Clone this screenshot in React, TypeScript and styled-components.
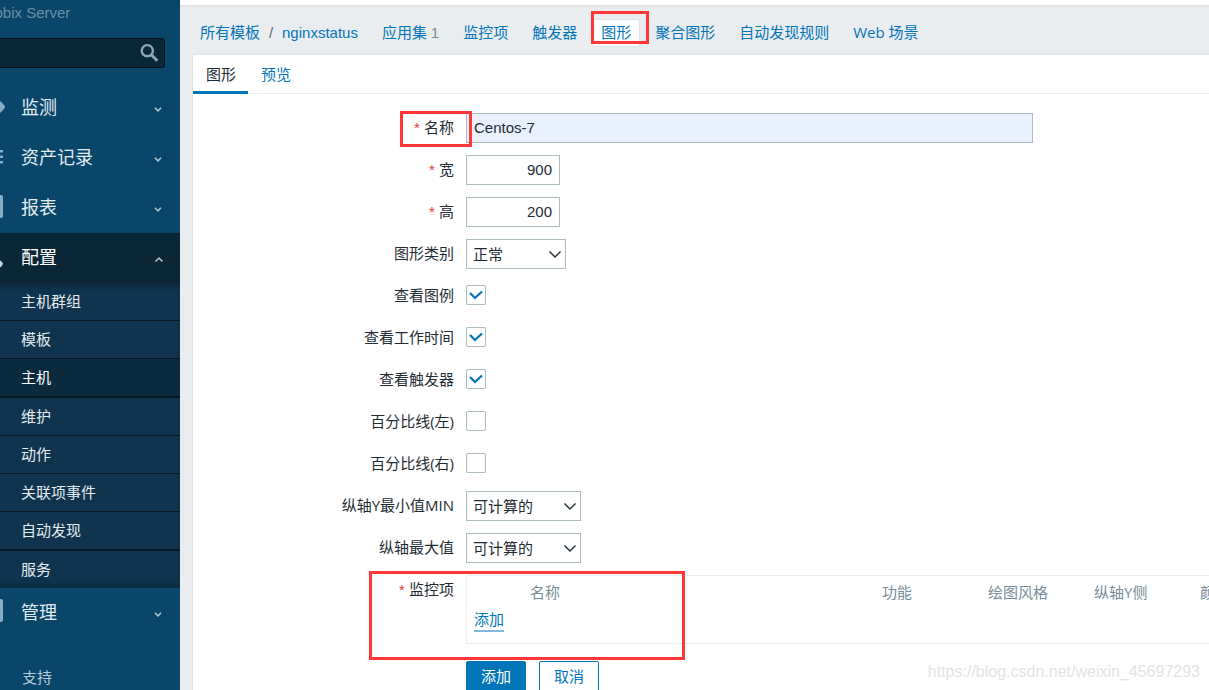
import React from 'react';
import styled, { createGlobalStyle, css } from 'styled-components';

const latin = '"Liberation Sans", Arial, "Noto Sans CJK SC", sans-serif';
const humanist = '"Open Sans", "Noto Sans CJK SC", sans-serif';
const blue = '#0275b8';
const marker = '#ff3737';

const GlobalStyle = createGlobalStyle`
  *, *::before, *::after { box-sizing: border-box; }
  body {
    margin: 0;
    background: #e9edf0;
    color: #1f2c33;
    font: 15px/20px ${latin};
  }
  a { color: ${blue}; text-decoration: none; }
  button, input, select { font: inherit; color: inherit; }
`;

const Shell = styled.div`
  position: relative;
  display: flex;
  height: 100vh;
  overflow: hidden;
`;

/* Sidebar */

const Sidebar = styled.aside`
  flex: 0 0 180px;
  overflow: hidden;
  background: #0a466a;
  color: #dfe9ef;
`;

const SidebarInner = styled.div`
  margin-left: -23px;
`;

const ServerName = styled.div`
  height: 38px;
  padding-top: 3px;
  color: #6b90a6;
`;

const SearchForm = styled.form`
  display: flex;
  align-items: center;
  height: 30px;
  margin: 0 15px 15px 0;
  border: 1px solid #04131c;
  border-radius: 3px;
  background: #0a2637;
`;

const SearchInput = styled.input`
  flex: 1;
  min-width: 0;
  height: 28px;
  border: 0;
  background: transparent;
  outline: 0;
`;

const SearchButton = styled.button`
  display: flex;
  padding: 0;
  margin-right: 5px;
  border: 0;
  background: transparent;
  color: #86a9bd;
`;

const Menu = styled.ul`
  margin: 0;
  padding: 0;
  list-style: none;
`;

const MenuLink = styled.a<{ $open?: boolean }>`
  display: flex;
  align-items: center;
  height: 50px;
  padding-right: 14px;
  color: ${p => (p.$open ? '#fff' : '#e3ecf1')};
  background: ${p => (p.$open ? '#0a2637' : 'transparent')};
  font-size: 18px;
`;

const MenuIcon = styled.svg<{ $open?: boolean }>`
  flex: none;
  width: 28px;
  height: 24px;
  margin-right: 16px;
  overflow: visible;
  color: ${p => (p.$open ? '#b5d5e8' : '#86aec6')};
`;

const MenuText = styled.span`
  flex: 1;
`;

const Chevron = styled.svg`
  width: 14px;
  height: 14px;
  margin-top: 4px;
  color: #b5cad6;
`;

const Submenu = styled.ul`
  margin: 0;
  padding: 0;
  list-style: none;
  background: #10344d;
  box-shadow: inset 0 8px 6px -6px #0a2637, inset 0 -8px 6px -6px #0a2637;
`;

const SubItem = styled.li<{ $rule: number }>`
  border-bottom: ${p => p.$rule}px solid #051923;
`;

const SubLink = styled.a<{ $active?: boolean }>`
  display: block;
  height: 37px;
  padding-left: 44px;
  line-height: 37px;
  color: ${p => (p.$active ? '#fff' : '#e3ecf1')};
  background: ${p => (p.$active ? '#0b2a3d' : 'transparent')};
`;

const SupportLink = styled.a`
  display: block;
  margin-top: 25px;
  padding-left: 45px;
  line-height: 30px;
  color: #b5cad6;
`;

/* Main area */

const Main = styled.main`
  flex: 1;
  min-width: 0;
  border-top: 1px solid #dfe4e7;
  margin-top: 5px;
  box-shadow: 0 -5px 0 #fff;
`;

const Breadcrumbs = styled.nav`
  display: flex;
  align-items: center;
  height: 48px;
  padding: 6px 0 0 20px;
  white-space: nowrap;
`;

const Slash = styled.span`
  width: 22px;
  color: #5c6b74;
  text-align: center;
`;

const CrumbTabs = styled.div`
  display: flex;
  gap: 8px;
  margin-left: 16px;
  font-family: ${humanist};
`;

const Crumb = styled.span<{ $current?: boolean }>`
  position: relative;
  height: 26px;
  padding: 0 8px;
  line-height: 24px;
  border-radius: 2px;
  ${p => p.$current && css`
    background: #fff;
    box-shadow: 0 0 0 1px #dfe4e7;
  `}
`;

const Count = styled.span`
  color: #768d99;
  font-family: ${latin};
`;

const Panel = styled.section`
  margin-left: 12px;
  min-height: 100%;
  border: solid #dfe4e7;
  border-width: 1px 0 0 1px;
  background: #fff;
`;

const TabBar = styled.div`
  display: flex;
  height: 39px;
  border-bottom: 1px solid #ebeeef;
`;

const Tab = styled.button<{ $selected?: boolean }>`
  height: 39px;
  padding: 3px 12px 0 13px;
  border: 0;
  border-bottom: 3px solid ${p => (p.$selected ? blue : 'transparent')};
  background: transparent;
  color: ${p => (p.$selected ? '#1f2c33' : blue)};
`;

const Form = styled.form`
  display: grid;
  grid-template-columns: 261px minmax(0, 1fr);
  column-gap: 12px;
  row-gap: 12px;
  padding-top: 19px;
  font-family: ${humanist};
`;

const FormLabel = styled.label<{ $required?: boolean }>`
  position: relative;
  justify-self: end;
  height: 30px;
  line-height: 28px;
  white-space: nowrap;
  ${p => p.$required && css`
    &::before {
      content: '* ';
      color: #e33734;
      font-family: ${latin};
    }
  `}
`;

const Field = styled.div<{ $check?: boolean }>`
  display: flex;
  align-items: center;
  height: ${p => (p.$check ? '28px' : '30px')};
`;

const TextInput = styled.input<{ $numeric?: boolean }>`
  width: ${p => (p.$numeric ? '94px' : '567px')};
  height: 30px;
  padding: 0 7px 2px;
  border: 1px solid #acbbc2;
  border-radius: 0;
  background: ${p => (p.$numeric ? '#fff' : '#e8f0fe')};
  font-family: ${latin};
  text-align: ${p => (p.$numeric ? 'right' : 'left')};
  outline: 0;
`;

const SelectBox = styled.div<{ $wide?: boolean }>`
  display: grid;
  width: ${p => (p.$wide ? '115px' : '100px')};
  align-items: center;
  > * { grid-area: 1 / 1; }
  > svg { justify-self: end; margin-right: 4px; pointer-events: none; }
`;

const Select = styled.select`
  appearance: none;
  width: 100%;
  height: 30px;
  padding: 0 6px;
  border: 1px solid #acbbc2;
  border-radius: 0;
  background: #fff;
`;

const CheckBox = styled.span`
  display: grid;
  width: 20px;
  height: 20px;
  > * { grid-area: 1 / 1; }
  > svg { pointer-events: none; visibility: hidden; }
  > input:checked + svg { visibility: visible; }
`;

const CheckInput = styled.input`
  appearance: none;
  width: 20px;
  height: 20px;
  margin: 0;
  border: 1px solid #acbbc2;
  border-radius: 2px;
  background: #fff;
`;

const ItemsFrame = styled.div`
  margin-bottom: 5px;
  width: 960px;
  height: 69px;
  border: 1px solid #ebeeef;
`;

const ItemsTable = styled.table`
  width: 100%;
  table-layout: fixed;
  border-collapse: collapse;
  th {
    height: 32px;
    padding: 0;
    color: #768d99;
    font-weight: 400;
    text-align: left;
  }
  td { padding: 1px 0 0 7px; }
`;

const Col = styled.col<{ $width?: number }>`
  width: ${p => (p.$width ? `${p.$width}px` : 'auto')};
`;

const AddLink = styled.a`
  display: inline-block;
  line-height: 21px;
  border-bottom: 2px solid #80b9da;
`;

const Actions = styled.div`
  grid-column: 2;
  display: flex;
  gap: 13px;
`;

const Button = styled.button<{ $primary?: boolean }>`
  width: 60px;
  height: 31px;
  padding: 0 0 2px;
  border: 1px solid ${blue};
  border-radius: 2px;
  background: ${p => (p.$primary ? blue : '#fff')};
  color: ${p => (p.$primary ? '#fff' : blue)};
`;

/* Red frames drawn over the page */

const Highlight = styled.span<{ $inset: string }>`
  position: absolute;
  inset: ${p => p.$inset};
  z-index: 1;
  border: 3px solid ${marker};
  pointer-events: none;
`;

const Watermark = styled.div`
  position: absolute;
  right: 9px;
  bottom: 8px;
  color: #e4e4e4;
  font-size: 16px;
`;

const ChevronIcon = ({ up }: { up?: boolean }) => (
  <Chevron viewBox="0 0 14 14" fill="none" stroke="currentColor" strokeWidth="1.5">
    <path d={up ? 'M3.500 8.500 7 5 10.500 8.500' : 'M3 4.800 6 8 9 4.800'} />
  </Chevron>
);

const icons: Record<string, React.ReactNode> = {
  eye: <path d="M0 11C6 4 10 2 14 2c3 0 6 1 9 3 2 1.500 3.500 3.200 4.700 5q.6 1 0 2C26.500 13.800 25 15.500 23 17c-3 2-6 3-9 3-4 0-8-2-14-9z" />,
  list: <path d="M2 4h4v2.500H2zM9 4h17v2.500H9zM2 9.500h4V12H2zM9 9.500h17V12H9zM2 15h4v2.500H2zM9 15h17v2.500H9z" />,
  report: <rect x="3" y="-1" width="23" height="23" rx="2" />,
  gear: <rect x="3" y="-2" width="23" height="23" rx="2" />,
  wrench: <path d="M5 3a6 6 0 0 1 8 7l8 5 2-.5q1.500.2 2.600 2.300.6 1 0 2Q24.500 21 23 21.500L11 13a6 6 0 0 1-9-6l4 3 3-3z" />,
};

const MenuEntry = ({ icon, text, open }: { icon: string; text: string; open?: boolean }) => (
  <MenuLink href="#" $open={open}>
    <MenuIcon viewBox="0 0 28 24" fill="currentColor" $open={open}>{icons[icon]}</MenuIcon>
    <MenuText>{text}</MenuText>
    <ChevronIcon up={open} />
  </MenuLink>
);

const submenu = [
  { text: '主机群组', rule: 1 },
  { text: '模板', rule: 1 },
  { text: '主机', rule: 2, active: true },
  { text: '维护', rule: 1 },
  { text: '动作', rule: 1 },
  { text: '关联项事件', rule: 1 },
  { text: '自动发现', rule: 2 },
  { text: '服务', rule: 0 },
];

const SelectField = ({ id, value, wide }: { id: string; value: string; wide?: boolean }) => (
  <Field>
    <SelectBox $wide={wide}>
      <Select id={id}><option>{value}</option></Select>
      <svg width="14" height="14" viewBox="0 0 14 14" fill="none" stroke="#1f2c33" strokeWidth="1.4">
        <path d="M1.500 4.500 7 10l5.500-5.500" />
      </svg>
    </SelectBox>
  </Field>
);

const CheckField = ({ id, checked }: { id: string; checked?: boolean }) => (
  <Field $check>
    <CheckBox>
      <CheckInput type="checkbox" id={id} defaultChecked={checked} />
      <svg width="20" height="20" viewBox="0 0 20 20" fill="none" stroke={blue} strokeWidth="2.3">
        <path d="M4 8 9 13 16 6.500" />
      </svg>
    </CheckBox>
  </Field>
);

export default function App() {
  return (
    <>
      <GlobalStyle />
      <Shell>
        <Sidebar>
          <SidebarInner>
            <ServerName>Zabbix Server</ServerName>
            <SearchForm>
              <SearchInput type="search" aria-label="搜索" />
              <SearchButton type="button" aria-label="搜索">
                <svg width="20" height="20" viewBox="0 0 20 20" fill="none" stroke="currentColor" strokeWidth="2.4">
                  <circle cx="8.300" cy="7.700" r="5.600" />
                  <path d="m12.300 11.700 6 6" strokeWidth="3" />
                </svg>
              </SearchButton>
            </SearchForm>
            <Menu>
              <li><MenuEntry icon="eye" text="监测" /></li>
              <li><MenuEntry icon="list" text="资产记录" /></li>
              <li><MenuEntry icon="report" text="报表" /></li>
              <li>
                <MenuEntry icon="wrench" text="配置" open />
                <Submenu>
                  {submenu.map(s => (
                    <SubItem key={s.text} $rule={s.rule}>
                      <SubLink href="#" $active={s.active}>{s.text}</SubLink>
                    </SubItem>
                  ))}
                </Submenu>
              </li>
              <li><MenuEntry icon="gear" text="管理" /></li>
            </Menu>
            <SupportLink href="#">支持</SupportLink>
          </SidebarInner>
        </Sidebar>

        <Main>
          <Breadcrumbs>
            <a href="#">所有模板</a>
            <Slash>/</Slash>
            <a href="#">nginxstatus</a>
            <CrumbTabs>
              <Crumb><a href="#">应用集</a> <Count>1</Count></Crumb>
              <Crumb><a href="#">监控项</a></Crumb>
              <Crumb><a href="#">触发器</a></Crumb>
              <Crumb $current>
                <a href="#">图形</a>
                <Highlight $inset="-9px -10px 2px -2px" />
              </Crumb>
              <Crumb><a href="#">聚合图形</a></Crumb>
              <Crumb><a href="#">自动发现规则</a></Crumb>
              <Crumb><a href="#">Web 场景</a></Crumb>
            </CrumbTabs>
          </Breadcrumbs>

          <Panel>
            <TabBar role="tablist">
              <Tab role="tab" aria-selected="true" $selected>图形</Tab>
              <Tab role="tab" aria-selected="false">预览</Tab>
            </TabBar>
            <Form>
              <FormLabel htmlFor="name" $required>
                名称
                <Highlight $inset="-2px -18px -4px -14px" />
              </FormLabel>
              <Field><TextInput id="name" defaultValue="Centos-7" /></Field>

              <FormLabel htmlFor="width" $required>宽</FormLabel>
              <Field><TextInput id="width" defaultValue="900" $numeric /></Field>

              <FormLabel htmlFor="height" $required>高</FormLabel>
              <Field><TextInput id="height" defaultValue="200" $numeric /></Field>

              <FormLabel htmlFor="type">图形类别</FormLabel>
              <SelectField id="type" value="正常" />

              <FormLabel htmlFor="legend">查看图例</FormLabel>
              <CheckField id="legend" checked />

              <FormLabel htmlFor="worktime">查看工作时间</FormLabel>
              <CheckField id="worktime" checked />

              <FormLabel htmlFor="triggers">查看触发器</FormLabel>
              <CheckField id="triggers" checked />

              <FormLabel htmlFor="left">百分比线(左)</FormLabel>
              <CheckField id="left" />

              <FormLabel htmlFor="right">百分比线(右)</FormLabel>
              <CheckField id="right" />

              <FormLabel htmlFor="ymin">纵轴Y最小值MIN</FormLabel>
              <SelectField id="ymin" value="可计算的" wide />

              <FormLabel htmlFor="ymax">纵轴最大值</FormLabel>
              <SelectField id="ymax" value="可计算的" wide />

              <FormLabel as="span" id="items-label" $required>
                监控项
                <Highlight $inset="-4px -231px -55px -30px" />
              </FormLabel>
              <ItemsFrame>
                <ItemsTable aria-labelledby="items-label">
                  <colgroup>
                    <Col $width={63} />
                    <Col $width={352} />
                    <Col $width={106} />
                    <Col $width={106} />
                    <Col $width={106} />
                    <Col />
                  </colgroup>
                  <thead>
                    <tr>
                      <th aria-label="排序" />
                      <th>名称</th>
                      <th>功能</th>
                      <th>绘图风格</th>
                      <th>纵轴Y侧</th>
                      <th>颜色</th>
                    </tr>
                  </thead>
                  <tbody>
                    <tr>
                      <td colSpan={6}><AddLink href="#">添加</AddLink></td>
                    </tr>
                  </tbody>
                </ItemsTable>
              </ItemsFrame>

              <Actions>
                <Button type="button" $primary>添加</Button>
                <Button type="button">取消</Button>
              </Actions>
            </Form>
          </Panel>
        </Main>
        <Watermark>https://blog.csdn.net/weixin_45697293</Watermark>
      </Shell>
    </>
  );
}
